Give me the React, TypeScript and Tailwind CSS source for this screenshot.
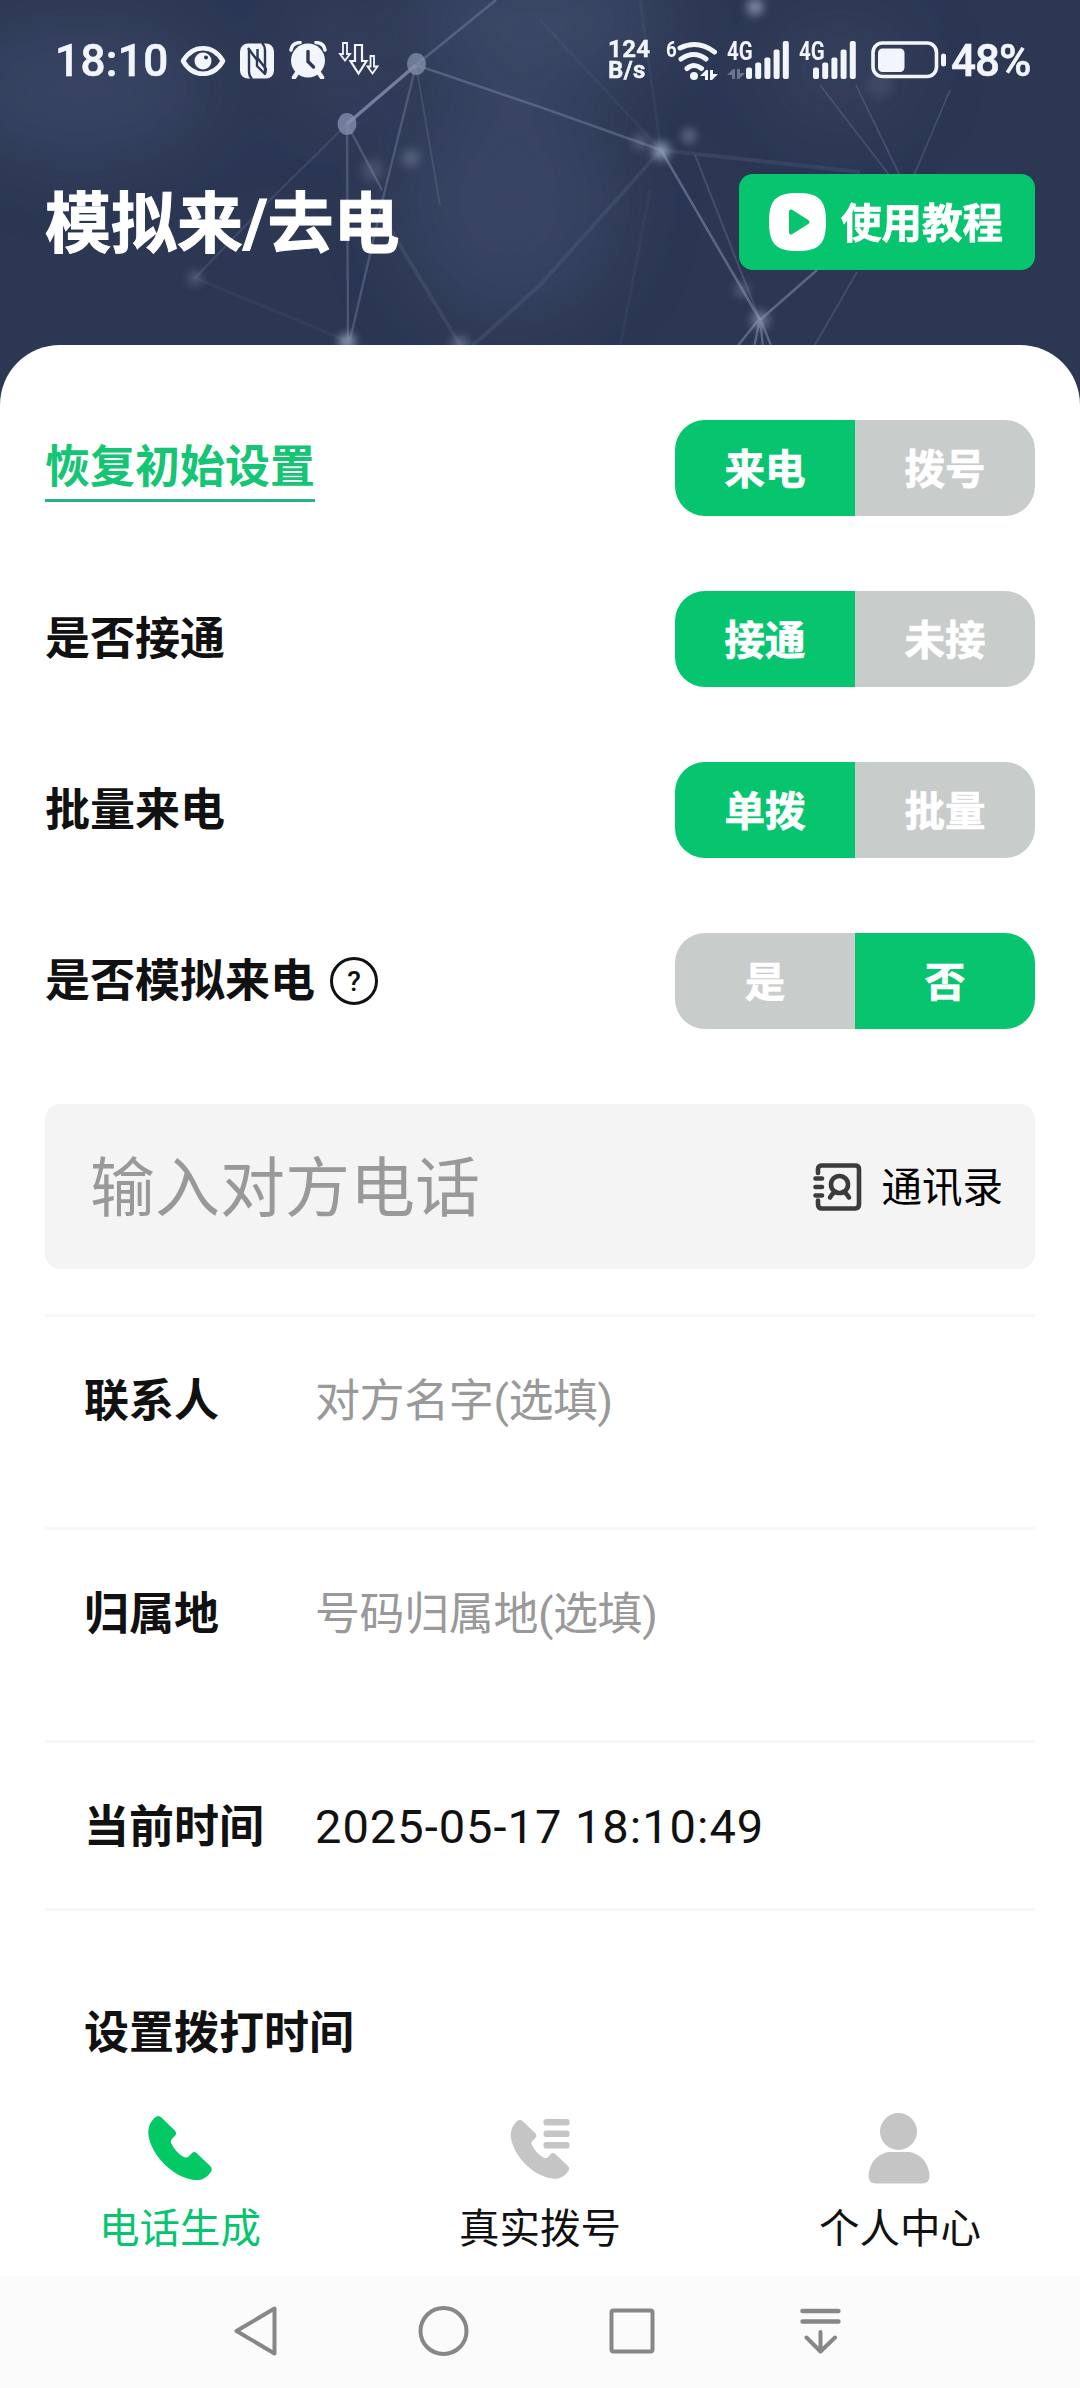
import React from "react";

const PHONE =
  "M7 1.6Q10.3-1.4 13.4 1.6L26.8 14.4Q29.4 17.2 27 19.8L23.6 23.2Q22.2 25 23.3 27.4C26.4 33.6 30.6 38.2 35.8 41Q38.6 42.4 40.6 40.6L43.6 37.4Q46.2 34.8 49 37.4L62.4 50.2Q65 53 62.6 56.2C58 62.6 53 64.6 46.4 64C24 61.4 2.6 38.2.4 18.6C-.1 11.6 2 6 7 1.6Z";

function NetworkBackdrop() {
  return (
    <svg className="absolute inset-0 h-full w-full" viewBox="0 0 1080 405" preserveAspectRatio="xMidYMid slice" aria-hidden="true">
      <defs>
        <filter id="soft" x="-100%" y="-100%" width="300%" height="300%">
          <feGaussianBlur stdDeviation="5" />
        </filter>
        <filter id="haze" x="-50%" y="-50%" width="200%" height="200%">
          <feGaussianBlur stdDeviation="38" />
        </filter>
        <filter id="line" x="0" y="0" width="1080" height="405" filterUnits="userSpaceOnUse">
          <feGaussianBlur stdDeviation="0.7" />
        </filter>
      </defs>
      <rect width="1080" height="405" fill="#2c3754" />
      <g filter="url(#haze)" fill="#4c5978">
        <ellipse cx="80" cy="90" rx="130" ry="70" opacity=".4" />
        <ellipse cx="510" cy="200" rx="110" ry="120" opacity=".4" />
        <ellipse cx="540" cy="20" rx="130" ry="60" opacity=".5" />
        <ellipse cx="840" cy="70" rx="70" ry="50" opacity=".3" />
        <ellipse cx="340" cy="60" rx="50" ry="70" opacity=".25" />
      </g>
      <g filter="url(#line)" stroke="#8a96b4" fill="none">
        <path d="M347 124L416 65" strokeWidth="3.4" opacity=".75" />
        <path d="M416 65L496 0M416 65L540 107L661 150" strokeWidth="2.6" opacity=".38" />
        <path d="M347 124L348 340M416 65L385 190L350 340M347 124L382 190" strokeWidth="2.4" opacity=".34" />
        <path d="M347 124L270 200L195 278M416 65L440 205" strokeWidth="2" opacity=".2" />
        <path d="M661 150L760 320M760 320L817 270" strokeWidth="2.6" opacity=".5" />
        <path d="M695 155L760 320" strokeWidth="2" opacity=".25" />
        <path d="M760 318L736 348M760 318L754 348M760 318L763 348M760 318L772 348" strokeWidth="2.4" opacity=".5" />
        <path d="M820 85L893 180M856 85L902 180M950 90L912 180M857 272L812 350" strokeWidth="1.8" opacity=".25" />
        <path d="M661 150L540 285L470 348M661 150L860 172M385 220L460 345" strokeWidth="4" opacity=".14" />
        <path d="M650 190L620 348M195 278L345 340M661 150L640 0M540 20L661 150" strokeWidth="3" opacity=".08" />
      </g>
      <g fill="#8793b0">
        <ellipse cx="416.500" cy="64" rx="9.500" ry="11" opacity=".72" />
        <ellipse cx="347" cy="124" rx="9.500" ry="11" opacity=".75" />
      </g>
      <g fill="#99a4be" filter="url(#soft)">
        <circle cx="661" cy="151" r="9" opacity=".85" />
        <circle cx="640" cy="142" r="7" opacity=".4" />
        <circle cx="689" cy="136" r="7" opacity=".5" />
        <circle cx="755" cy="7" r="8" opacity=".8" />
        <circle cx="760" cy="320" r="9" opacity=".6" />
        <circle cx="742" cy="290" r="7" opacity=".4" />
        <circle cx="347" cy="342" r="8" opacity=".9" />
        <circle cx="460" cy="345" r="9" opacity=".45" />
        <circle cx="195" cy="278" r="7" opacity=".35" />
        <circle cx="411" cy="158" r="9" opacity=".35" />
        <circle cx="372" cy="170" r="11" opacity=".22" />
        <circle cx="880" cy="85" r="13" opacity=".12" />
      </g>
    </svg>
  );
}

function SignalBars() {
  return (
    <svg className="absolute bottom-0 right-0" width="43" height="38" viewBox="0 0 43 38" fill="#f3f5fd">
      <rect x="0" y="26.500" width="6" height="11.500" rx="2" />
      <rect x="9.200" y="21.500" width="6" height="16.500" rx="2" />
      <rect x="18.400" y="16.500" width="6" height="21.500" rx="2" />
      <rect x="27.600" y="8.500" width="6" height="29.500" rx="2" />
      <rect x="36.800" y="0" width="6" height="38" rx="2" />
    </svg>
  );
}

function Signal({ activity = false }: { activity?: boolean }) {
  return (
    <div className={activity ? "relative h-[38px] w-[62px]" : "relative h-[38px] w-[57px]"}>
      <span className="absolute left-0 top-[-2px] origin-left scale-x-[0.82] font-['Roboto'] text-[25px] font-bold leading-none">4G</span>
      {activity && (
        <svg className="absolute bottom-0 left-0" width="18" height="10" viewBox="0 0 18 10" fill="#6b7590">
          <path d="M0 6L6 0H8V10H5V6ZM10 0H13V4H18L12 10H10Z" />
        </svg>
      )}
      <SignalBars />
    </div>
  );
}

function StatusBar() {
  return (
    <div className="relative flex h-[120px] items-center pl-[55px] pr-12 font-['Roboto'] text-[#f3f5fd]">
      <span className="w-[112px] whitespace-nowrap pt-0.5 text-[44px] font-medium leading-none tracking-[0.4px] [-webkit-text-stroke:0.6px_#f3f5fd]">18:10</span>
      <svg className="ml-[13px] mt-0.5" width="46" height="32" viewBox="0 0 46 32">
        <path d="M3 16C13-1 33-1 43 16C33 33 13 33 3 16Z" fill="none" stroke="#f3f5fd" strokeWidth="4.600" strokeLinejoin="round" />
        <circle cx="23" cy="16" r="8.500" fill="#f3f5fd" />
        <circle cx="26" cy="12.500" r="2" fill="#2c3754" />
      </svg>
      <svg className="ml-3.5 mt-0.5" width="34" height="36" viewBox="0 0 34 36">
        <rect x="0" y="0.500" width="34" height="35" rx="8" fill="#f3f5fd" />
        <path d="M9 6V29Q9 33 12 36M25 30V7Q25 3 22 0" fill="none" stroke="#2c3754" strokeWidth="2.400" />
        <path d="M8 5L17 17V23L25 31L26 26L17.500 15V6" fill="none" stroke="#2c3754" strokeWidth="2.400" strokeLinejoin="round" />
      </svg>
      <svg className="ml-[15px]" width="38" height="38" viewBox="0 0 38 38">
        <circle cx="19" cy="19.500" r="17" fill="#f3f5fd" />
        <path d="M8 32L5 36.500M30 32L33 36.500" stroke="#f3f5fd" strokeWidth="4.500" strokeLinecap="round" />
        <path d="M2 9Q3 2 11 1.500M36 9Q35 2 27 1.500" fill="none" stroke="#f3f5fd" strokeWidth="3.500" strokeLinecap="round" />
        <path d="M19 10.500V20.500L24.500 26" fill="none" stroke="#2c3754" strokeWidth="3.400" strokeLinecap="round" />
      </svg>
      <svg className="ml-[11px]" width="42" height="36" viewBox="0 0 42 36" fill="none" stroke="#f3f5fd" strokeWidth="1.800">
        <path d="M5 1H9V12H12L7 18.500L2 12H5Z" />
        <path d="M17 3H24V19H28.500L20.500 31.500L12.500 19H17Z" strokeWidth="2.200" />
        <path d="M32.500 14H36V24.500H39.500L34.500 31.500L29.500 24.500H32.500Z" />
      </svg>
      <div className="flex-1" />
      <div className="mr-0.5 flex w-[44px] flex-col text-[24px] font-bold leading-[21px] [-webkit-text-stroke:0.4px_#f3f5fd]">
        <span className="tracking-[0.4px]">124</span>
        <span className="tracking-[0.4px]">B/s</span>
      </div>
      <div className="relative ml-[10px] h-11 w-[55px]">
        <span className="absolute left-[2px] top-[1px] origin-left scale-x-[0.85] text-[22px] font-bold leading-none">6</span>
        <svg className="absolute inset-0" width="55" height="44" viewBox="0 0 55 44" fill="none" stroke="#f3f5fd" strokeWidth="5" strokeLinecap="round">
          <path d="M16 10Q34 1.500 50.500 14M17 21Q30 12 42 21M23 30.500Q30 24.500 37.500 30.500" />
          <circle cx="30" cy="38" r="4" fill="#f3f5fd" stroke="none" />
          <path d="M36 38L42 32H44V42H41V38ZM46 32H49V36H54L48 42H46Z" fill="#f3f5fd" stroke="none" />
        </svg>
      </div>
      <div className="ml-2 flex gap-[10px]">
        <Signal activity />
        <Signal />
      </div>
      <svg className="ml-[15px]" width="76" height="38" viewBox="0 0 76 38">
        <rect x="2" y="2" width="63.500" height="33.500" rx="9.500" fill="none" stroke="#f3f5fd" strokeWidth="3.600" />
        <rect x="7" y="7.500" width="26.500" height="23.500" rx="4.500" fill="#f3f5fd" />
        <rect x="70" y="12.500" width="5" height="13" rx="2.500" fill="#f3f5fd" />
      </svg>
      <span className="ml-1 w-[81px] whitespace-nowrap pt-0.5 text-[44px] font-medium leading-none tracking-[-1px] [-webkit-text-stroke:0.6px_#f3f5fd]">48%</span>
    </div>
  );
}

function Toggle({ options, active }: { options: [string, string]; active: 0 | 1 }) {
  return (
    <div className="flex h-24 w-[360px] overflow-hidden rounded-[30px] text-[40.5px] font-bold text-white [-webkit-text-stroke:0.7px_white]">
      {options.map((label, i) => (
        <button
          key={label}
          className={
            i === active
              ? "flex flex-1 items-center justify-center bg-[#07c56f] pt-1 leading-none"
              : "flex flex-1 items-center justify-center bg-[#c8cccb] pt-1 leading-none"
          }
        >
          {label}
        </button>
      ))}
    </div>
  );
}

function SettingRow({ children, options, active }: { children: React.ReactNode; options: [string, string]; active: 0 | 1 }) {
  return (
    <div className="mb-[75px] flex h-24 items-center justify-between text-[45px] font-bold leading-none text-[#111]">
      {children}
      <Toggle options={options} active={active} />
    </div>
  );
}

function Field({ label, children, className }: { label: string; children: React.ReactNode; className: string }) {
  return (
    <div className={className}>
      <span className="w-[231px] font-bold">{label}</span>
      {children}
    </div>
  );
}

function Header() {
  return (
    <header className="relative h-[405px]">
      <NetworkBackdrop />
      <StatusBar />
      <div className="relative mt-[54px] flex h-24 items-center justify-between px-[45px] text-white">
        <h1 className="pt-1.5 text-[66px] font-bold leading-none [-webkit-text-stroke:1px_white]">模拟来/去电</h1>
        <button className="flex h-24 w-[296px] items-center rounded-[14px] bg-[#07c56f] pl-[30px] text-[40.5px] font-bold leading-none [-webkit-text-stroke:0.7px_white]">
          <svg width="57" height="58" viewBox="0 0 57 58">
            <path d="M28.500 0C50 0 57 7 57 29S50 58 28.500 58S0 51 0 29S7 0 28.500 0Z" fill="#fff" />
            <path d="M22 18.500L38.500 29L22 39.500Z" fill="#07c56f" stroke="#07c56f" strokeWidth="4" strokeLinejoin="round" />
          </svg>
          <span className="ml-[15px] pt-1">使用教程</span>
        </button>
      </div>
    </header>
  );
}

function TabBar() {
  return (
    <nav className="grid h-[196px] grid-cols-3 bg-white text-[40.5px] leading-none text-[#111]">
      <div className="flex flex-col items-center text-[#07c56f]">
        <div className="flex h-[129px] items-end pb-[28px]">
          <svg width="64" height="65" viewBox="0 0 64 65" fill="#02c964">
            <path d={PHONE} />
          </svg>
        </div>
        <span>电话生成</span>
      </div>
      <div className="flex flex-col items-center">
        <div className="flex h-[129px] items-end pb-[30px]">
          <svg width="60" height="60" viewBox="0 0 60 60" fill="#c5c5c5">
            <path d={PHONE} transform="translate(.5 .8) scale(.92)" />
            <rect x="33.500" y="0" width="26" height="6.500" rx="2.500" />
            <rect x="33.500" y="11.500" width="26" height="6.500" rx="2.500" />
            <rect x="33.500" y="23" width="26" height="6.500" rx="2.500" />
          </svg>
        </div>
        <span>真实拨号</span>
      </div>
      <div className="flex flex-col items-center">
        <div className="flex h-[129px] items-end pb-[25px] pr-[3px]">
          <svg width="62" height="71" viewBox="0 0 62 71" fill="#c5c5c5">
            <circle cx="30.500" cy="18.500" r="18.500" />
            <path d="M22 39H40C54 40 61 52 61.500 63Q61.500 70.500 54 70.500H8Q.5 70.500 .5 63C1 52 8 40 22 39Z" />
          </svg>
        </div>
        <span>个人中心</span>
      </div>
    </nav>
  );
}

function SystemNav() {
  return (
    <div className="flex h-[112px] items-center bg-[#fbfbfb] pb-0.5 pl-[233px]">
      <svg width="45" height="52" viewBox="0 0 45 52" fill="none" stroke="#878787" strokeWidth="4" strokeLinejoin="round">
        <path d="M3.500 26L41.500 3.500V48.500Z" />
      </svg>
      <svg className="ml-[140px]" width="51" height="52" viewBox="0 0 51 52" fill="none" stroke="#878787" strokeWidth="4">
        <circle cx="25.500" cy="26" r="23" />
      </svg>
      <svg className="ml-[140px]" width="46" height="46" viewBox="0 0 46 46" fill="none" stroke="#878787" strokeWidth="4">
        <rect x="2.500" y="2.500" width="41" height="41" rx="2" />
      </svg>
      <svg className="ml-[145px]" width="42" height="46" viewBox="0 0 42 46" fill="none" stroke="#878787" strokeWidth="4" strokeLinecap="round" strokeLinejoin="round">
        <path d="M2.500 3H38.500M2.500 13.500H38.500" strokeWidth="4.400" />
        <path d="M20.500 24V43M6.500 29.500L20.500 43.500L35 29.500" />
      </svg>
    </div>
  );
}

export default function App() {
  return (
    <div className="flex h-[2388px] w-[1080px] flex-col overflow-hidden bg-white font-['Roboto','Noto_Sans_CJK_SC',sans-serif]">
      <Header />
      <main className="relative mt-[-60px] h-[1735px] overflow-hidden rounded-t-[60px] bg-white px-[45px] pt-[75px]">
        <SettingRow options={["来电", "拨号"]} active={0}>
          <span className="flex h-[68px] items-center border-b-[3px] border-[#2bb080] pt-0.5 text-[#14c573]">恢复初始设置</span>
        </SettingRow>
        <SettingRow options={["接通", "未接"]} active={0}>
          <span>是否接通</span>
        </SettingRow>
        <SettingRow options={["单拨", "批量"]} active={0}>
          <span>批量来电</span>
        </SettingRow>
        <SettingRow options={["是", "否"]} active={1}>
          <span className="flex items-center">
            是否模拟来电
            <span className="ml-[15px] flex h-12 w-12 items-center justify-center rounded-full border-[3px] border-[#111] pt-0.5 font-['Roboto'] text-[28px] font-medium">?</span>
          </span>
        </SettingRow>

        <div className="flex h-[165px] items-center rounded-[15px] bg-[#f4f4f4] pl-[45px] pr-[32px] leading-none">
          <span className="flex-1 pt-1.5 text-[65px] text-[#999]">输入对方电话</span>
          <svg width="49" height="48" viewBox="0 0 49 48" fill="none" stroke="#3c3c3c" strokeWidth="4.600" strokeLinecap="round">
            <path d="M5 10V6Q5 2.500 9 2.500H42Q46 2.500 46 6V41Q46 45.500 42 45.500H9Q5 45.500 5 41V37.500M2.500 15.500H9M2.500 24H9M2.500 32.500H9" />
            <circle cx="26.500" cy="21.500" r="8.500" />
            <path d="M17 34.500Q19 30.500 22.500 29M36 34.500Q34 30.500 30.500 29" />
          </svg>
          <span className="ml-[20px] pt-1 text-[40.5px] text-black">通讯录</span>
        </div>

        <div className="mt-[45px] text-[45px] leading-none text-[#111]">
          <Field label="联系人" className="flex h-[213px] border-t-[3px] border-[#f7f7f7] pl-[39px] pt-[62px]">
            <span className="tracking-[-0.4px] text-[#999]">对方名字(选填)</span>
          </Field>
          <Field label="归属地" className="flex h-[213px] border-t-[3px] border-[#f7f7f7] pl-[39px] pt-[62px]">
            <span className="tracking-[-0.4px] text-[#999]">号码归属地(选填)</span>
          </Field>
          <Field label="当前时间" className="flex h-[171px] border-y-[3px] border-[#f7f7f7] pl-[39px] pt-[62px]">
            <span className="mt-[-2px] font-['Roboto'] text-[47px] tracking-[1px]">2025-05-17 18:10:49</span>
          </Field>
          <h2 className="pl-[39px] pt-[100px] font-bold">设置拨打时间</h2>
        </div>
      </main>
      <TabBar />
      <SystemNav />
    </div>
  );
}
